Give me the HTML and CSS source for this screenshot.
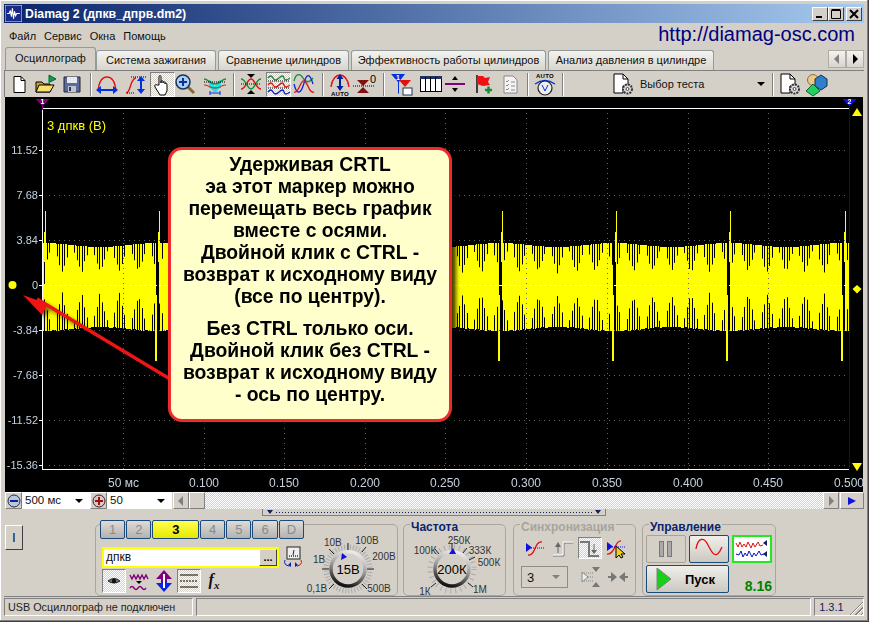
FILE: index.html
```html
<html lang="ru">
<head>
  <meta charset="UTF-8">
  <title>Diamag 2</title>
  <link rel="stylesheet" href="styles.css">
</head>
<body>
  <div class="window">
    <div class="titlebar">
      <svg class="app-icon" width="17" height="17" viewBox="0 0 16 16"><rect width="16" height="16" fill="#1a2a8a" stroke="#dde" stroke-width="1"/><path d="M2 8h2l1-3 1 6 1-8 1 10 1-7 1 4 1-2h3" fill="none" stroke="#fff"/></svg>
      <span class="title-text">Diamag 2 (дпкв_дпрв.dm2)</span>
      <div class="caption-buttons">
        <button class="caption-btn"><svg width="12" height="12" viewBox="0 0 12 12"><rect x="2" y="8" width="6" height="2"/></svg></button>
        <button class="caption-btn"><svg width="12" height="12" viewBox="0 0 12 12"><path d="M1.5 2.5h9v8h-9z M1.5 1.5h9" fill="none" stroke="#000"/></svg></button>
        <button class="caption-btn close"><svg width="12" height="12" viewBox="0 0 12 12"><path d="M2 2l8 8M10 2l-8 8" stroke="#000" stroke-width="2"/></svg></button>
      </div>
    </div>

    <div class="menubar">
      <span>Файл</span><span>Сервис</span><span>Окна</span><span>Помощь</span>
      <span class="site-url">http://diamag-osc.com</span>
    </div>

    <div class="tabs">
      <div class="tab active">Осциллограф</div>
      <div class="tab t2">Система зажигания</div>
      <div class="tab t3">Сравнение цилиндров</div>
      <div class="tab t4">Эффективность работы цилиндров</div>
      <div class="tab t5">Анализ давления в цилиндре</div>
      <div class="tab-scroll">
        <button><svg width="8" height="10" viewBox="0 0 8 10"><path d="M6 0v10L1 5z" fill="#808080"/></svg></button>
        <button><svg width="8" height="10" viewBox="0 0 8 10"><path d="M2 0v10l5-5z"/></svg></button>
      </div>
    </div>

    <div class="toolbar">
      <div class="tb"><svg width="24" height="24" viewBox="0 0 24 24"><path d="M7 4.5h7l4 4v12H7z" fill="#fff" stroke="#000"/><path d="M14 4.5v4h4" fill="none" stroke="#000"/></svg></div>
      <div class="tb g2"><svg width="24" height="24" viewBox="0 0 24 24"><path d="M3 20V10h6l2 2h6v8z" fill="#c8a030" stroke="#000"/><path d="M3 20l3-7h15l-4 7z" fill="#f8e070" stroke="#000"/><path d="M16 11V3l7 4-6 3" fill="#10a040" stroke="#064"/></svg></div>
      <div class="tb g3"><svg width="24" height="24" viewBox="0 0 24 24"><path d="M4 5h16v15H4z" fill="#5a6a9a" stroke="#223"/><rect x="7" y="5" width="10" height="6" fill="#e8e8f0"/><rect x="8" y="14" width="8" height="6" fill="#c0c4d0"/><rect x="9" y="15" width="2" height="4" fill="#335"/></svg></div>
      <i class="tb-sep g6"></i>
      <div class="tb g3"><svg width="24" height="24" viewBox="0 0 24 24"><path d="M3 19C4 9 8 5 12 5s8 4 9 14" fill="none" stroke="#e01010" stroke-width="1.4"/><path d="M3 18h18" stroke="#0030e0" stroke-width="2"/><path d="M1 18l5-4v8zM23 18l-5-4v8z" fill="#0030e0"/></svg></div>
      <div class="tb g5"><svg width="24" height="24" viewBox="0 0 24 24"><path d="M2 21c5 0 4-15 10-15" fill="none" stroke="#e01010" stroke-width="1.4"/><path d="M7 5h15M3 21h8" stroke="#000" stroke-dasharray="1 1"/><path d="M17 8v10" stroke="#0030e0" stroke-width="2"/><path d="M17 4l-4 5h8zM17 22l-4-5h8z" fill="#0030e0"/></svg></div>
      <div class="tb pressed wide g2"><svg width="24" height="24" viewBox="0 0 24 24"><path d="M8 13V5c0-2 2-2 2 0v6-1c0-2 2-2 2 0v1c0-2 2-2 2 0v1c0-2 2-1 2 1v6l-2 4H9l-5-8c-1-2 1-3 2-2z" fill="#fff" stroke="#000"/></svg></div>
      <div class="tb narrow"><svg width="24" height="24" viewBox="0 0 24 24"><path d="M15 15l6 6" stroke="#8a6a30" stroke-width="3"/><circle cx="10" cy="10" r="7" fill="#a8d0f0" stroke="#203050" stroke-width="1.5"/><path d="M10 6v8M6 10h8" stroke="#1030a0" stroke-width="2"/></svg></div>
      <div class="tb g8"><svg width="24" height="24" viewBox="0 0 24 24"><path d="M6 8c4 0 4 6 6 6s2-6 6-6v8c-4 0-3 4-6 4s-2-4-6-4z" fill="#10e8e8"/><path d="M1 7c5 0 5 5 11 5s6-5 11-5" fill="none" stroke="#109030" stroke-width="1.4"/><path d="M1 13c5 0 5 3 11 3s6-3 11-3" fill="none" stroke="#e01010"/><path d="M1 10h22" stroke="#000" stroke-dasharray="1 1"/><path d="M7 21h10M7 19v4M17 19v4" stroke="#0030e0"/></svg></div>
      <i class="tb-sep g6"></i>
      <div class="tb g4"><svg width="24" height="24" viewBox="0 0 24 24"><path d="M2 17c5 0 6-10 10-10s5 10 10 10" fill="none" stroke="#e01010" stroke-width="1.3"/><path d="M2 7c5 0 6 10 10 10s5-10 10-10" fill="none" stroke="#109030" stroke-width="1.3"/><path d="M2 12h20" stroke="#000" stroke-dasharray="1 1"/><path d="M8 2h8l-4 4zM8 22h8l-4-4z"/></svg></div>
      <div class="tb pressed wide g3"><svg width="24" height="24" viewBox="0 0 24 24"><g fill="none" stroke-width="1.3"><path d="M1 6q3-4 5 0t6 0 5 0 6 0" stroke="#109030"/><path d="M1 13q3-4 5 0t6 0 5 0 6 0" stroke="#e01010"/><path d="M1 20q3-4 5 0t6 0 5 0 6 0" stroke="#1020e0"/></g><path d="M1 9h22M1 16h22" stroke="#000" stroke-dasharray="1 1"/></svg></div>
      <div class="tb g1"><svg width="24" height="24" viewBox="0 0 24 24"><g fill="none" stroke-width="1.3"><path d="M2 9c2-8 6-8 9-3s6 5 10 0" stroke="#109030"/><path d="M2 12c3 12 7 10 10-1s6-9 9 1" stroke="#1020e0"/><path d="M2 20c5 2 6-12 10-11s5 13 10 11" stroke="#e01010"/></g></svg></div>
      <i class="tb-sep g6"></i>
      <div class="tb g4"><svg width="24" height="24" viewBox="0 0 24 24"><path d="M3 15C4 7 8 3 12 3s8 4 9 12" fill="none" stroke="#e01010" stroke-width="1.4"/><path d="M12 6v9" stroke="#0020a0" stroke-width="2"/><path d="M12 2l-3.500 5h7zM12 19l-3.500-5h7z" fill="#0020a0"/><text x="12" y="24" class="svg-auto" text-anchor="middle">AUTO</text></svg></div>
      <div class="tb"><svg width="24" height="24" viewBox="0 0 24 24"><path d="M5 8h12l-6 6zM5 21h12l-6-6z" fill="#801010"/><path d="M1 14h22" stroke="#000" stroke-dasharray="1 1"/><text x="18" y="11" class="svg-zero">0</text></svg></div>
      <i class="tb-sep g7"></i>
      <div class="tb g4"><svg width="24" height="24" viewBox="0 0 24 24"><path d="M2 2h14l-6 8v12l-1-1V10z" fill="#0030e0"/><path d="M10 8h12l-6 7z" fill="#e01010"/><rect x="14" y="16" width="9" height="7" fill="#fff" stroke="#203060"/><text x="9" y="8" class="svg-num" text-anchor="middle">1</text></svg></div>
      <div class="tb g6"><svg width="24" height="24" viewBox="0 0 24 24"><rect x="1.500" y="4.500" width="21" height="15" fill="#fff" stroke="#000"/><rect x="1" y="4" width="22" height="3" fill="#203060"/><path d="M6.500 5v14M11.500 5v14M16.500 5v14" stroke="#000"/></svg></div>
      <div class="tb"><svg width="24" height="24" viewBox="0 0 24 24"><path d="M2 12h20" stroke="#800080" stroke-width="2"/><path d="M9 8h6l-3-4zM9 16h6l-3 4z"/></svg></div>
      <div class="tb g4"><svg width="24" height="24" viewBox="0 0 24 24"><path d="M6 3v18" stroke="#000" stroke-width="1.4"/><path d="M6 4h6l2 2 5-1-2 5 2 3-7 1-6-2z" fill="#f01010"/><path d="M14 18h7M17.500 14.500v7" stroke="#109030" stroke-width="2.4"/></svg></div>
      <div class="tb g3"><svg width="24" height="24" viewBox="0 0 24 24"><path d="M6 4h9l4 4v13H6z" fill="#f4f4f4" stroke="#888"/><path d="M8 9l1 1 2-2M8 13l1 1 2-2M8 17l1 1 2-2M13 10h4M13 14h4M13 18h4" stroke="#888" fill="none"/></svg></div>
      <i class="tb-sep g5"></i>
      <div class="tb g4"><svg width="24" height="24" viewBox="0 0 24 24"><text x="12" y="6" class="svg-auto" text-anchor="middle">AUTO</text><path d="M2 12q10-7 20 0" fill="none" stroke="#0030e0" stroke-width="1.4"/><circle cx="12" cy="16" r="7" fill="#eee" stroke="#222" stroke-width="1.200"/><path d="M9 13l3 6 3-6" fill="none" stroke="#0030e0"/></svg></div>
      <i class="tb-sep g5"></i>
      <div class="test-combo">
        <svg width="24" height="24" viewBox="0 0 24 24"><use href="#doc-gear"/></svg>
        <span>Выбор теста</span>
        <i class="combo-arrow"></i>
      </div>
      <i class="tb-sep"></i>
      <div class="tb g4"><svg width="24" height="24" viewBox="0 0 24 24"><use href="#doc-gear"/></svg></div>
      <div class="tb g3"><svg width="24" height="24" viewBox="0 0 24 24"><circle cx="8" cy="8" r="5.500" fill="#f0c880" stroke="#807060"/><path d="M16 3l6 4v7l-6 4-6-4V7z" fill="#3080c8" stroke="#103050"/><path d="M8 12l7 7-7 5-7-5z" fill="#20d060" stroke="#106030"/></svg></div>
    </div>

    <svg class="defs" width="0" height="0"><defs>
      <g id="doc-gear"><path d="M3 2h9l5 5v7h-5v7H3z" fill="#fff" stroke="#000"/><path d="M12 2v5h5" fill="none" stroke="#000"/><circle cx="16.500" cy="17" r="4.500" fill="#ddd" stroke="#333" stroke-width="2" stroke-dasharray="2 1"/><circle cx="16.500" cy="17" r="1.500" fill="#fff" stroke="#444"/></g>
      <linearGradient id="knob-ring" x1="0.700" y1="0" x2="0.400" y2="1"><stop offset="0" stop-color="#eeeeee"/><stop offset="0.5" stop-color="#999"/><stop offset="1" stop-color="#111"/></linearGradient>
    </defs></svg>

    <div class="plot">
      <canvas id="scope" width="858" height="395"></canvas>
      <div id="labels"></div>
      <span class="trace-name">3 дпкв (В)</span>
      <svg class="arrow" width="175" height="110" viewBox="0 0 175 110"><path d="M175 92L32 6" stroke="#ee1515" stroke-width="3.500"/><path d="M18 2L43 11 37 22z" fill="#ee1515"/></svg>
      <div class="callout">
        <p>Удерживая CRTL<br>эа этот маркер можно<br>перемещать весь график<br>вместе с осями.<br>Двойной клик с CTRL -<br>возврат к исходному виду<br>(все по центру).</p>
        <p>Без CTRL  только оси.<br>Двойной клик без CTRL -<br>возврат к исходному виду<br>- ось по центру.</p>
      </div>
    </div>

    <div class="scrollrow">
      <button class="zoom-btn"><svg width="14" height="14" viewBox="0 0 14 14"><circle cx="7" cy="7" r="6" fill="#b8c8d8" stroke="#203040"/><path d="M3 7h8" stroke="#1020a0" stroke-width="2"/></svg></button>
      <div class="combo c-time"><span>500 мс</span><i class="combo-arrow"></i></div>
      <button class="zoom-btn"><svg width="14" height="14" viewBox="0 0 14 14"><circle cx="7" cy="7" r="6" fill="#d8c8c8" stroke="#402020"/><path d="M3 7h8M7 3v8" stroke="#a01010" stroke-width="2"/></svg></button>
      <div class="combo c-step"><span>50</span><i class="combo-arrow"></i></div>
      <button class="sb-btn"><svg width="8" height="10" viewBox="0 0 8 10"><path d="M6 0v10L1 5z" fill="#808080"/></svg></button>
      <button class="sb-btn"></button>
      <div class="sb-track"></div>
      <button class="sb-btn"><svg width="8" height="10" viewBox="0 0 8 10"><path d="M2 0v10l5-5z" fill="#808080"/></svg></button>
      <button class="sb-play"><svg width="10" height="10" viewBox="0 0 10 10"><path d="M1 1v8l8-4z" fill="#1010e0"/></svg></button>
    </div>

    <div class="splitter"><i class="split-tri"></i><i class="split-dots"></i><i class="split-tri"></i></div>

    <div class="controls">
      <button class="side-btn">I</button>

      <div class="group g-channel">
        <div class="channel-col">
          <div class="channels">
            <button class="ch">1</button><button class="ch">2</button><button class="ch on">3</button><button class="ch">4</button><button class="ch">5</button><button class="ch">6</button><button class="ch">D</button>
          </div>
          <div class="name-row">
            <div class="name-input"><span>дпкв</span><button>...</button></div>
            <svg width="20" height="22" viewBox="0 0 20 22"><rect x="4" y="1" width="13" height="12" fill="#eee" stroke="#222"/><path d="M6 10h9" stroke="#109030" stroke-width="2" stroke-dasharray="1 1"/><path d="M10 9l1-5" stroke="#222"/><path d="M2 14a4 4 0 0 0 6 5" fill="none" stroke="#1020a0"/><path d="M18 14a4 4 0 0 1-6 5" fill="none" stroke="#e01010"/><path d="M8 16v5l-3-2zM12 16v5l3-2z" fill="#1020a0"/></svg>
          </div>
          <div class="ch-tools">
            <div class="ct pressed"><svg width="22" height="22" viewBox="0 0 22 22"><path d="M5 11q6-5 12 0-6 4-12 0z" fill="#777" stroke="#222"/><circle cx="11" cy="11" r="2.200" fill="#111"/></svg></div>
            <div class="ct"><svg width="22" height="22" viewBox="0 0 22 22"><path d="M2 5l2 4 2-4 2 4 2-4 2 4 2-4 2 4 2-4 2 4" fill="none" stroke="#800080" stroke-width="1.400"/><path d="M2 18q2-3 4 0t4 0 4 0 4 0" fill="none" stroke="#800080" stroke-width="1.400"/><path d="M8 11h6l-3 3z"/></svg></div>
            <div class="ct"><svg width="22" height="24" viewBox="0 0 22 24"><path d="M11 1l8 9h-5v2H8v-2H3z" fill="#800080"/><path d="M11 23l8-9h-5v-2H8v2H3z" fill="#1020e0"/><path d="M11 5v14" stroke="#fff" stroke-width="2"/></svg></div>
            <div class="ct pressed"><svg width="22" height="22" viewBox="0 0 22 22"><path d="M2 5h18M2 17h18" stroke="#000"/><path d="M2 11h18" stroke="#000" stroke-dasharray="2 1"/></svg></div>
            <div class="ct"><span class="fx">f<sub>x</sub></span></div>
          </div>
        </div>
        <svg class="knob k-volt" width="90" height="64" viewBox="0 0 90 64">
          <circle cx="44" cy="36" r="22" fill="none" stroke="#aaa" stroke-width="5" stroke-dasharray="1 2"/>
          <path d="M18 36h7M25 16l5 5M44 10v7M62 14l-4 5M70 36h-7M25 56l5-5M63 56l-5-5" stroke="#222"/>
          <circle cx="44" cy="36" r="17" fill="#d4d0c8" stroke="url(#knob-ring)" stroke-width="3.500"/>
          <path d="M37 27l6-3-5-4z" fill="#1010e0"/>
          <text x="44" y="41" text-anchor="middle" class="knob-val">15В</text>
          <g class="knob-lbl"><text x="20" y="13">10В</text><text x="63" y="11" text-anchor="middle">100В</text><text x="15" y="30" text-anchor="middle">1В</text><text x="80" y="27" text-anchor="middle">200В</text><text x="13" y="59" text-anchor="middle">0,1В</text><text x="75" y="59" text-anchor="middle">500В</text></g>
        </svg>
      </div>

      <div class="group g-freq">
        <span class="group-title">Частота</span>
        <svg class="knob k-freq" width="101" height="64" viewBox="0 0 101 64">
          <circle cx="48" cy="36" r="22" fill="none" stroke="#aaa" stroke-width="5" stroke-dasharray="1 4"/>
          <path d="M31 16l4 5M48 10v8M63 15l-4 5M71 24l-6 3M27 54l5-4M69 54l-5-4" stroke="#222"/>
          <circle cx="48" cy="36" r="17" fill="#d4d0c8" stroke="url(#knob-ring)" stroke-width="3.500"/>
          <path d="M49 15l-4 6h7z" fill="#1010e0"/>
          <text x="48" y="41" text-anchor="middle" class="knob-val">200К</text>
          <g class="knob-lbl"><text x="55" y="11" text-anchor="middle">250К</text><text x="21" y="21" text-anchor="middle">100К</text><text x="76" y="21" text-anchor="middle">333К</text><text x="85" y="33" text-anchor="middle">500К</text><text x="21" y="62" text-anchor="middle">1К</text><text x="76" y="60" text-anchor="middle">1М</text></g>
        </svg>
      </div>

      <div class="group g-sync">
        <span class="group-title muted">Синхронизация</span>
        <div class="sync-row">
          <div class="st"><svg width="22" height="22" viewBox="0 0 22 22"><path d="M3 18c8 1 6-14 14-13" fill="none" stroke="#e01010" stroke-width="1.300"/><path d="M4 11h16" stroke="#1010e0" stroke-dasharray="1 1"/><path d="M1 6v9l6-4.500z" fill="#1010e0"/></svg></div>
          <div class="st"><svg width="22" height="22" viewBox="0 0 22 22"><path d="M1 19h11V6h9" fill="none" stroke="#777" stroke-width="1"/><path d="M1 18h10V5h10" fill="none" stroke="#fff"/><path d="M6 5l-3 5h6z" fill="#666"/><path d="M6 9v7" stroke="#666"/></svg></div>
          <div class="st pressed"><svg width="22" height="22" viewBox="0 0 22 22"><path d="M1 5h9v14h10" fill="none" stroke="#777" stroke-width="2"/><path d="M15 7v7" stroke="#666"/><path d="M12 13h6l-3 4z" fill="#666"/></svg></div>
          <div class="st"><svg width="22" height="24" viewBox="0 0 22 24"><path d="M1 18c8 1 8-14 14-13" fill="none" stroke="#e01010" stroke-width="1.300"/><path d="M4 11h16" stroke="#1010e0" stroke-dasharray="1 1"/><path d="M1 6v9l6-4.500z" fill="#1010e0"/><path d="M10 10v12l3-3 2 3 2-1-2-3h4z" fill="#f0d020" stroke="#000"/></svg></div>
        </div>
        <div class="sync-row second">
          <div class="sync-combo"><span>3</span><i class="combo-arrow gray"></i></div>
          <div class="st"><svg width="22" height="22" viewBox="0 0 22 22"><path d="M2 7h12M2 11h12M2 15h12" stroke="#888" stroke-dasharray="1 1"/><path d="M8 11l-6-5v10z" fill="#eee" stroke="#888"/><path d="M12 1h8l-4 5zM12 21h8l-4-5z" fill="#777"/></svg></div>
          <div class="st"><svg width="22" height="22" viewBox="0 0 22 22"><path d="M1 11h8M13 11h8" stroke="#777" stroke-width="2"/><path d="M10 11L4 6v10zM12 11l6-5v10z" fill="#777"/></svg></div>
        </div>
      </div>

      <div class="group g-run">
        <span class="group-title">Управление</span>
        <div class="run-grid">
          <button class="rb disabled"><svg width="16" height="18" viewBox="0 0 16 18"><rect x="1.500" y="1.500" width="4" height="15" fill="#aaa" stroke="#777"/><rect x="9.500" y="1.500" width="4" height="15" fill="#aaa" stroke="#777"/></svg></button>
          <button class="rb"><svg width="30" height="24" viewBox="0 0 30 24"><path d="M2 12C4 0 10 0 14 8s8 16 14 2" fill="none" stroke="#e01010" stroke-width="1.300"/></svg></button>
          <button class="rb wave"><svg width="34" height="24" viewBox="0 0 34 24"><path d="M1 6l2 4 2-5 2 5 2-3 2 3 2-5 3 6 2-5 2 4 3-5 2 4 3-1" fill="none" stroke="#e01010"/><path d="M1 17l3 1 2-4 2 6 2-4 2 3 2-5 3 6 2-4 2 3 3-5 2 4 3-1" fill="none" stroke="#1010c0"/><path d="M28 6l4-3v6zM28 17l4-3v6z" fill="#102060"/></svg></button>
          <button class="rb start"><svg width="18" height="24" viewBox="0 0 18 24"><path d="M2 1v22l14-11z" fill="#18d018" stroke="#808080"/></svg><span>Пуск</span></button>
          <span class="speed">8.16</span>
        </div>
      </div>
    </div>

    <div class="statusbar">
      <div class="cell s1">USB Осциллограф не подключен</div>
      <div class="cell s2"></div>
      <div class="cell s3">1.3.1<i class="grip"></i></div>
    </div>
  </div>
  <script src="script.js"></script>
</body>
</html>
```
FILE: styles.css
```css
* {
  box-sizing: border-box;
  margin: 0;
  padding: 0;
}

body {
  font-family: "Liberation Sans", Arial, sans-serif;
  font-size: 11px;
  background: #d4d0c8;
  overflow: hidden;
}

button {
  font-family: inherit;
}

.window {
  width: 869px;
  height: 622px;
  padding: 4px 5px 4px 4px;
  background: #d4d0c8;
  box-shadow: inset -1px -1px #404040, inset -2px -2px #808080, inset 1px 1px #fff;
  color: #111;
}

.titlebar {
  height: 19px;
  display: flex;
  align-items: center;
  padding: 0 2px 0 1px;
  background: linear-gradient(90deg, #0a246a, #a6caf0);
  color: #fff;
}

.app-icon {
  margin-right: 3px;
}

.title-text {
  font-weight: bold;
  font-size: 12.3px;
}

.caption-buttons {
  margin-left: auto;
  display: flex;
}

.caption-btn {
  width: 16px;
  height: 14px;
  display: flex;
  align-items: center;
  justify-content: center;
  background: #d4d0c8;
  border: 1px solid;
  border-color: #fff #404040 #404040 #fff;
}

.caption-btn.close {
  margin-left: 2px;
}

.menubar {
  height: 26px;
  display: flex;
  align-items: flex-start;
  padding: 7px 0 0 5px;
  gap: 8px;
  position: relative;
}

.site-url {
  margin-left: auto;
  margin-right: 9px;
  margin-top: -7px;
  font-size: 20px;
  color: #000080;
}

.tabs {
  height: 22px;
  display: flex;
  align-items: flex-end;
  padding-left: 1px;
  margin-top: -1px;
}

.tab {
  height: 20px;
  line-height: 18px;
  text-align: center;
  background: linear-gradient(#f4f3ef, #d8d5cd);
  border: 1px solid #919b9c;
  border-bottom: none;
  border-radius: 3px 3px 0 0;
  margin-right: 2px;
}

.tab.active {
  width: 91px;
  height: 23px;
  line-height: 21px;
  background: #d4d0c8;
  margin-right: 0;
  position: relative;
  z-index: 1;
}

.tab.t2 { width: 120px; }
.tab.t3 { width: 131px; }
.tab.t4 { width: 195px; }
.tab.t5 { width: 166px; margin-right: 0; }

.tab-scroll {
  margin-left: auto;
  margin-bottom: 2px;
  display: flex;
}

.tab-scroll button {
  width: 18px;
  height: 18px;
  display: flex;
  align-items: center;
  justify-content: center;
  background: linear-gradient(#f4f3ef, #d8d5cd);
  border: 1px solid #b0aca4;
}

.toolbar {
  height: 27px;
  display: flex;
  align-items: center;
  padding-left: 2px;
  border: 1px solid #808080;
  border-width: 1px 0 0 1px;
}

.tb {
  width: 24px;
  height: 25px;
  flex: none;
  display: flex;
  align-items: center;
  justify-content: center;
}

.tb.wide { width: 25px; }
.tb.narrow { width: 20px; }

.tb svg { overflow: visible; flex: none; }

.g1 { margin-left: 1px; }
.g2 { margin-left: 2px; }
.g3 { margin-left: 3px; }
.g4 { margin-left: 4px; }
.g5 { margin-left: 5px; }
.g6 { margin-left: 6px; }
.g7 { margin-left: 7px; }
.g8 { margin-left: 8px; }

.tb-sep {
  width: 2px;
  height: 23px;
  flex: none;
  border-left: 1px solid #808080;
  border-right: 1px solid #fff;
}

.pressed {
  background: conic-gradient(#fff 25%, #d4d0c8 0 50%, #fff 0 75%, #d4d0c8 0) 0 0 / 2px 2px;
  border: 1px solid;
  border-color: #808080 #fff #fff #808080;
}

.svg-auto {
  font-size: 6px;
  font-weight: bold;
  letter-spacing: 0.3px;
}

.svg-zero { font-size: 11px; }

.svg-num {
  font-size: 7px;
  font-weight: bold;
  fill: #fff;
}

.test-combo {
  width: 208px;
  flex: none;
  display: flex;
  align-items: center;
  padding-left: 47px;
}

.test-combo span { margin-left: 5px; }

.combo-arrow {
  width: 0;
  height: 0;
  border: 4px solid transparent;
  border-top: 4px solid #000;
  border-bottom: none;
  margin-left: auto;
  margin-right: 7px;
}

.combo-arrow.gray { border-top-color: #808080; }

.defs { position: absolute; }

.plot {
  position: relative;
  width: 858px;
  height: 395px;
  margin-left: 1px;
  background: #000;
  overflow: hidden;
}

#scope { display: block; }

.axis-label {
  position: absolute;
  font-size: 12px;
  line-height: 14px;
  color: #c4d2e0;
  white-space: nowrap;
}

.axis-label.y-axis {
  width: 33px;
  font-size: 11px;
  text-align: right;
}

.trace-name {
  position: absolute;
  left: 42px;
  top: 21px;
  color: #ffff00;
  font-size: 13px;
}

.arrow {
  position: absolute;
  left: 0;
  top: 196px;
  filter: drop-shadow(3px 3px 2px rgba(0, 0, 0, 0.55));
}

.callout {
  position: absolute;
  left: 163px;
  top: 50px;
  width: 284px;
  height: 275px;
  padding-top: 3px;
  background: #ffffcc;
  border: 3px solid #ee2b2b;
  border-radius: 14px;
  box-shadow: 4px 3px 4px rgba(0, 0, 0, 0.75);
  font-size: 19.35px;
  font-weight: bold;
  line-height: 22px;
  text-align: center;
  color: #000;
}

.callout p + p { margin-top: 10px; }

.scrollrow {
  height: 17px;
  display: flex;
  margin-left: 1px;
}

.zoom-btn {
  width: 17px;
  display: flex;
  align-items: center;
  justify-content: center;
  background: #d4d0c8;
  border: 1px solid;
  border-color: #fff #808080 #808080 #fff;
}

.combo {
  display: flex;
  align-items: center;
  background: #fff;
  padding-left: 3px;
  font-size: 11.5px;
  line-height: 17px;
}

.c-time { width: 68px; }
.c-step { width: 65px; margin-right: 1px; }

.sb-btn {
  width: 16px;
  display: flex;
  align-items: center;
  justify-content: center;
  background: #d4d0c8;
  border: 1px solid;
  border-color: #fff #808080 #808080 #fff;
}

.sb-track {
  flex: 1;
  background: conic-gradient(#fff 25%, #d4d0c8 0 50%, #fff 0 75%, #d4d0c8 0) 0 0 / 2px 2px;
}

.sb-play {
  width: 24px;
  margin-left: 1px;
  display: flex;
  align-items: center;
  justify-content: center;
  background: #d4d0c8;
  border: 1px solid;
  border-color: #fff #808080 #808080 #fff;
}

.splitter {
  width: 344px;
  height: 7px;
  margin-left: 258px;
  display: flex;
  align-items: center;
  padding: 0 4px;
  gap: 3px;
  border: 1px solid #808080;
  border-top: none;
}

.split-tri {
  border: 3px solid transparent;
  border-top: 4px solid #102060;
  border-bottom: none;
}

.split-dots {
  flex: 1;
  height: 1px;
  background: repeating-linear-gradient(90deg, #102060 0 1px, transparent 1px 3px);
}

.controls {
  height: 81px;
  display: flex;
  align-items: flex-start;
  padding-left: 1px;
  border-bottom: 1px solid #808080;
}

.side-btn {
  width: 18px;
  height: 25px;
  margin-top: 9px;
  background: #d4d0c8;
  border: 1px solid;
  border-color: #fff #404040 #404040 #fff;
  font-size: 12px;
  color: #000;
}

.group {
  position: relative;
  height: 72px;
  margin-top: 8px;
  flex: none;
  border: 1px solid #aaa69e;
  border-radius: 5px;
}

.g-channel {
  width: 303px;
  margin-left: 72px;
  display: flex;
}

.g-freq {
  width: 103px;
  margin-left: 5px;
}

.g-sync {
  width: 123px;
  margin-left: 7px;
}

.g-run {
  width: 134px;
  margin-left: 6px;
}

.group-title {
  position: absolute;
  left: 6px;
  top: -5px;
  padding: 0 1px;
  background: #d4d0c8;
  font-size: 12px;
  font-weight: bold;
  line-height: 14px;
  color: #0a246a;
}

.group-title.muted { color: #a8a49c; }

.channel-col {
  width: 208px;
  flex: none;
  padding-left: 4px;
}

.channels {
  display: flex;
  gap: 1px;
  margin-top: -5px;
}

.ch {
  width: 26px;
  height: 19px;
  background: linear-gradient(#dedcd8, #b4b2ae);
  border: 1px solid #1a4a7a;
  border-radius: 2px;
  color: #8a8a8a;
  font-size: 13px;
}

.ch.on {
  width: 48px;
  background: linear-gradient(#ffff50, #e8e800);
  color: #000;
  font-weight: bold;
}

.name-row {
  display: flex;
  align-items: center;
  gap: 4px;
  margin-top: 7px;
  margin-left: 2px;
  width: 204px;
}

.name-input {
  width: 177px;
  height: 21px;
  flex: none;
  display: flex;
  align-items: center;
  justify-content: space-between;
  padding-left: 2px;
  background: #fff;
  border: 2px solid #ffff00;
  font-size: 12px;
}

.name-input button {
  width: 18px;
  height: 17px;
  background: #d4d0c8;
  border: 1px solid;
  border-color: #fff #404040 #404040 #fff;
  font-size: 11px;
  font-weight: bold;
  line-height: 8px;
}

.ch-tools {
  display: flex;
  align-items: center;
  gap: 1px;
  margin-left: 2px;
  margin-top: 1px;
}

.ct {
  width: 24px;
  height: 24px;
  flex: none;
  display: flex;
  align-items: center;
  justify-content: center;
}

.fx {
  font-family: "Liberation Serif", serif;
  font-style: italic;
  font-weight: bold;
  font-size: 16px;
}

.fx sub { font-size: 11px; }

.knob {
  flex: none;
  display: block;
  overflow: visible;
}

.k-volt { margin-top: 8px; }

.k-freq { margin-top: 8px; }

.knob-val { font-size: 13px; }

.knob-lbl text { font-size: 10px; fill: #333; }

.sync-row {
  display: flex;
  margin-top: 12px;
  padding-left: 10px;
  gap: 3px;
}

.sync-row.second {
  margin-top: 7px;
  padding-left: 7px;
  align-items: flex-start;
}

.st {
  width: 24px;
  height: 22px;
  flex: none;
  display: flex;
  align-items: center;
  justify-content: center;
}

.sync-combo {
  width: 47px;
  height: 22px;
  display: flex;
  align-items: center;
  padding-left: 5px;
  margin-right: 8px;
  border: 1px solid #918d85;
  font-size: 13px;
}

.run-grid {
  display: grid;
  grid-template-columns: 40px 40px 40px;
  grid-template-rows: 28px 28px;
  gap: 2px 3px;
  padding: 10px 0 0 3px;
}

.rb {
  display: flex;
  align-items: center;
  justify-content: center;
  background: linear-gradient(#f0efeb, #cbc8c0);
  border: 1px solid #1a4a7a;
  border-radius: 2px;
}

.rb.disabled {
  background: #d4d0c8;
  border-color: #a8a49c;
}

.rb.wave {
  background: #fff;
  border: 2px solid #22e822;
  border-radius: 0;
}

.rb.start {
  grid-column: span 2;
  justify-content: flex-start;
  padding-left: 8px;
  font-size: 13px;
  font-weight: bold;
}

.rb.start span { margin-left: 12px; }

.speed {
  align-self: end;
  justify-self: end;
  font-size: 14px;
  font-weight: bold;
  line-height: 14px;
  color: #008000;
}

.statusbar {
  height: 20px;
  display: flex;
  gap: 3px;
  padding-top: 1px;
}

.cell {
  height: 18px;
  line-height: 16px;
  padding-left: 3px;
  border: 1px solid;
  border-color: #808080 #fff #fff #808080;
}

.s1 { width: 190px; font-size: 10.8px; color: #222; }
.s2 { width: 617px; }

.s3 {
  width: 50px;
  padding-left: 4px;
  position: relative;
  color: #102060;
}

.grip {
  position: absolute;
  right: 0;
  bottom: 0;
  width: 14px;
  height: 14px;
  background: repeating-linear-gradient(135deg, transparent 0 2px, #808080 2px 3px, #fff 3px 4px);
  clip-path: polygon(100% 0, 100% 100%, 0 100%);
}
```
FILE: script.js
```javascript
const canvas = document.getElementById('scope');
const ctx = canvas.getContext('2d');
const labelBox = document.getElementById('labels');

// page coordinates, the plot starts at 5,98
ctx.translate(-5, -98);

const LEFT = 43, RIGHT = 849, TOP = 109, BOTTOM = 470;
const yTicks = [[151, '11.52'], [196, '7.68'], [241, '3.84'], [286, '0'], [331, '-3.84'], [376, '-7.68'], [421, '-11.52'], [466, '-15.36']];
const xTicks = [[123, '50 мс'], [204, '0.100'], [284, '0.150'], [365, '0.200'], [445, '0.250'], [526, '0.300'], [607, '0.350'], [688, '0.400'], [768, '0.450'], [849, '0.500']];

function rect(color, x, y, w, h) {
  ctx.fillStyle = color;
  ctx.fillRect(x, y, w, h);
}

function drawWave() {
  const first = 42.5, firing = 114.3, sub = firing / 6;
  let seed = 7;
  const rnd = () => {
    seed = (seed * 9301 + 49297) % 233280;
    return seed / 233280;
  };

  for (let x = LEFT; x <= RIGHT; x++) {
    const phase = ((x - first) % firing) / firing;
    const env = 4 * Math.pow(Math.cos(phase * Math.PI), 2);
    rect('#ffff00', x, Math.round(288 - 40 - env), 1, Math.round(80 + 2 * env));
  }

  for (let x = LEFT + 1; x < RIGHT; x += 2.5) {
    const d = ((x - first) % sub + sub) % sub;
    const dist = Math.min(d, sub - d);
    const px = Math.round(x);
    if (dist > 7) continue;
    const tri = 1 - dist / 9;
    rect('#000', px, 240, 1, 6 + 30 * tri * (0.85 + 0.15 * rnd()));
    rect('#000', px, 330 - 38 * tri * (0.85 + 0.15 * rnd()), 1, 38);
  }

  // firing spikes
  for (let k = 0; k < 8; k++) {
    const s = Math.round(first + k * firing);
    if (k > 0) {
      rect('#000', s - 1, 240, 3, 95);
      rect('#ffff00', s - 2, 296, 2, 66);
    }
    rect('#000', s + 1, 255, 1, 30);
    rect('#ffff00', s + 2, 212, 1, 70);
    rect('#ffff00', s + 1, 233, 1, 30);
  }
}

function drawGrid() {
  yTicks.forEach(([y]) => {
    for (let x = LEFT + 6; x < RIGHT; x += 5) {
      if (y === 286) rect('#fff', x, y, 3, 1);
      else rect('#666', x, y, 1, 1);
    }
    rect('#fff', 39, y, 4, 1);
  });
  xTicks.slice(0, -1).forEach(([x]) => {
    for (let y = TOP + 5; y < BOTTOM; y += 5) rect('#666', x, y, 1, 1);
  });
  rect('#fff', 42, TOP, RIGHT - 42, 1);
  rect('#fff', 42, BOTTOM, RIGHT - 42, 1);
  rect('#fff', 42, TOP, 1, BOTTOM - TOP);
  rect('#0000d0', RIGHT, 104, 1, BOTTOM - 104);
}

function triangle(color, x, y, w, h) {
  ctx.fillStyle = color;
  ctx.beginPath();
  ctx.moveTo(x - w, y);
  ctx.lineTo(x + w, y);
  ctx.lineTo(x, y + h);
  ctx.fill();
}

function drawMarkers() {
  rect('#800080', 42, 103, 1, 8);
  triangle('#800080', 42.5, 100, 7, 7);
  triangle('#1010e0', 849.5, 100, 7, 7);
  ctx.fillStyle = '#fff';
  ctx.font = 'bold 7px "Liberation Sans"';
  ctx.textAlign = 'center';
  ctx.fillText('1', 42.5, 105);
  ctx.fillText('2', 849.5, 105);

  triangle('#ffff00', 857, 117, 5, -8);
  triangle('#ffff00', 857, 464, 5, 8);

  ctx.fillStyle = '#ffff00';
  ctx.beginPath();
  ctx.arc(12.5, 286, 4, 0, Math.PI * 2);
  ctx.fill();
  ctx.beginPath();
  ctx.moveTo(857, 286);
  ctx.lineTo(861.5, 290);
  ctx.lineTo(857, 294.5);
  ctx.lineTo(852.5, 290);
  ctx.fill();
}

function addLabels() {
  yTicks.forEach(([y, text]) => {
    const el = document.createElement('span');
    el.className = 'axis-label y-axis';
    el.textContent = text;
    el.style.left = '0px';
    el.style.top = (y - 98 - 7) + 'px';
    labelBox.appendChild(el);
  });
  xTicks.forEach(([x, text]) => {
    const el = document.createElement('span');
    el.className = 'axis-label';
    el.textContent = text;
    el.style.left = (x - 5 - (text.length > 5 ? 20 : 15)) + 'px';
    el.style.top = '379px';
    labelBox.appendChild(el);
  });
}

drawWave();
drawGrid();
drawMarkers();
addLabels();
```
